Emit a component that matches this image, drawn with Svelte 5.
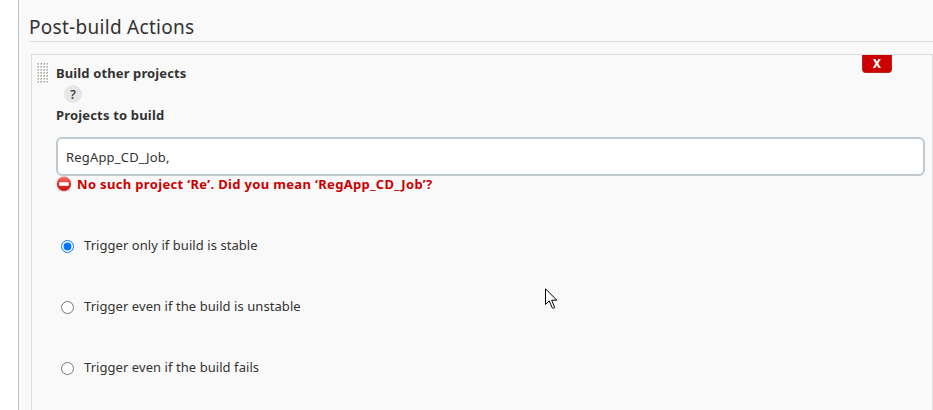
<script>
  let selected = $state('stable');
  let projects = $state('RegApp_CD_Job,');
  const thresholds = [
    { value: 'stable', label: 'Trigger only if build is stable' },
    { value: 'unstable', label: 'Trigger even if the build is unstable' },
    { value: 'fails', label: 'Trigger even if the build fails' }
  ];
  const dots = Array.from({ length: 28 }, (_, i) => ({ x: (i % 4) * 3, y: Math.floor(i / 4) * 3 }));
</script>

<div class="page">
  <main>
    <h1>Post-build Actions</h1>
    <section>
      <div class="top">
        <svg class="grip" width="13" height="22" viewBox="0 0 13 22" shape-rendering="crispEdges">
          <rect width="13" height="22" fill="#fff" />
          {#each dots as d}
            <rect x={d.x + 1} y={d.y + 1} width="2" height="2" fill="#d2d2ce" />
            <rect x={d.x + 2} y={d.y + 1} width="1" height="1" fill="#a5a5a0" />
          {/each}
        </svg>
        <div class="title">
          <b class="name">Build other projects</b>
          <button class="help" aria-label="Help">?</button>
        </div>
        <button class="delete" aria-label="Delete">X</button>
      </div>
      <div class="body">
        <label class="field" for="projects">Projects to build</label>
        <input id="projects" type="text" bind:value={projects} spellcheck="false" />
        <div class="error">
          <svg width="16" height="16" viewBox="0 0 16 16">
            <defs>
              <linearGradient id="red" x1="0" y1="0" x2="0" y2="1">
                <stop offset="0" stop-color="#f47a70" />
                <stop offset=".5" stop-color="#e42d27" />
                <stop offset="1" stop-color="#ca1714" />
              </linearGradient>
            </defs>
            <ellipse cx="8" cy="14.2" rx="6" ry="1.6" fill="#999" opacity=".35" />
            <circle cx="8" cy="7.9" r="7" fill="url(#red)" stroke="#d7433d" stroke-width=".6" />
            <rect x="3" y="6" width="10" height="4" rx="1" fill="#fff" stroke="#c9413a" stroke-width=".4" />
          </svg>
          <span>No such project ‘Re’. Did you mean ‘RegApp_CD_Job’?</span>
        </div>
        <div class="options">
          {#each thresholds as t}
            <label>
              <input type="radio" name="threshold" value={t.value} bind:group={selected} />
              <span>{t.label}</span>
            </label>
          {/each}
        </div>
      </div>
    </section>
  </main>
  <svg class="cursor" width="13" height="22" viewBox="0 0 13 22">
    <path d="M.5.8V16.5L4.2 12.9 7.2 19.8Q8.3 20.7 9.7 19.5L6.7 12.2H11.8Z" fill="#fff" stroke="#000" />
  </svg>
</div>

<style>
  :global(body) { background: #fff; overflow: hidden; }
  * { box-sizing: border-box; }
  .page {
    position: relative;
    height: 410px;
    padding-left: 18px;
    overflow: hidden;
    color: #333;
    font-family: "Noto Sans", "Open Sans", sans-serif;
    font-size: 13px;
  }
  main {
    height: 410px;
    padding-left: 10px;
    background: #f9f9f9;
    border-left: 1px solid #bcc6cc;
  }
  h1 {
    height: 42px;
    margin: 0;
    padding-top: 13px;
    border-bottom: 1px solid #dedede;
    font-size: 19px;
    font-weight: 400;
    letter-spacing: .29px;
    line-height: 28px;
  }
  section {
    height: 370px;
    margin: 12px 0 0 2px;
    border: 1px solid #dedede;
  }
  .top { display: flex; height: 50px; padding-left: 4px; }
  .grip { margin-top: 7px; }
  .title {
    display: flex;
    flex: 1;
    flex-direction: column;
    align-items: flex-start;
    padding: 8px 0 0 7px;
  }
  .name, .field { line-height: 20px; font-weight: 700; white-space: nowrap; }
  .name { letter-spacing: .12px; }
  .help {
    width: 18px;
    height: 18px;
    margin: 2px 0 0 8px;
    padding: 0;
    border: 0;
    border-radius: 50%;
    background: #e6e6e6;
    color: #333;
    font: 500 13px/17px "Noto Sans", sans-serif;
  }
  .delete {
    width: 30px;
    height: 18px;
    margin-right: 40px;
    padding: 0;
    border: 1px solid #b8251c;
    border-top: 0;
    border-radius: 0 0 4px 4px;
    background: #c00;
    color: #fff;
    font: 700 12px/18px "DejaVu Sans Condensed", "DejaVu Sans", sans-serif;
  }
  .body { padding: 0 7px 0 24px; }
  .field { display: block; height: 32px; letter-spacing: .17px; }
  input[type="text"] {
    display: block;
    width: 869px;
    height: 39px;
    padding: 0 8px;
    border: 2px solid #c1cad0;
    border-radius: 6px;
    outline: 0;
    background: #fff;
    color: #333;
    font: 13px "Noto Sans", sans-serif;
    letter-spacing: .18px;
  }
  .error {
    display: flex;
    align-items: flex-start;
    gap: 5px;
    height: 17px;
    color: #c00;
    font-weight: 700;
    letter-spacing: .34px;
    line-height: 16px;
    white-space: nowrap;
  }
  .error svg { flex: none; }
  .options { display: flex; flex-direction: column; gap: 41px; padding-top: 42px; }
  .options label { display: flex; align-items: center; height: 20px; gap: 10px; letter-spacing: .06px; }
  input[type="radio"] { width: 13px; height: 13px; margin: 2px 0 0 5px; }
  .cursor { position: absolute; left: 545px; top: 288px; }
</style>
